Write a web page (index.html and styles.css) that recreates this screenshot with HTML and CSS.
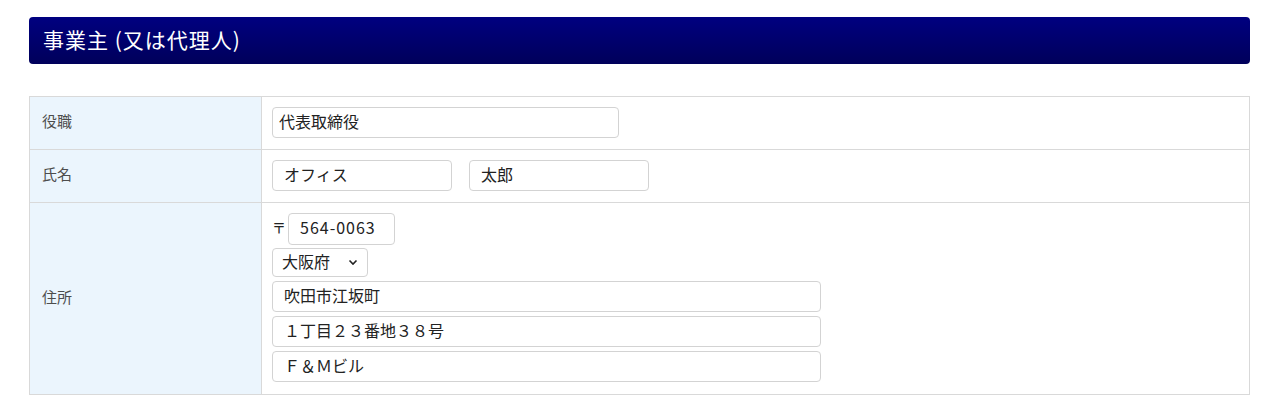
FILE: index.html
```html
<!DOCTYPE html>
<html lang="ja">
<head>
    <meta charset="UTF-8">
    <title>事業主 (又は代理人)</title>
    <link rel="stylesheet" href="styles.css">
</head>
<body>
    <div class="section">
        <h2 class="section-title">事業主 (又は代理人)</h2>

        <table class="form-table">
            <colgroup>
                <col class="col-label">
                <col>
            </colgroup>
            <tr>
                <th>役職</th>
                <td><input type="text" class="input w-title" value="代表取締役"></td>
            </tr>
            <tr>
                <th>氏名</th>
                <td>
                    <div class="name-row">
                        <input type="text" class="input w-name" value="オフィス">
                        <input type="text" class="input w-name" value="太郎">
                    </div>
                </td>
            </tr>
            <tr>
                <th>住所</th>
                <td class="address-cell">
                    <div class="address">
                        <div class="zip-row">
                            <span class="zip-mark">〒</span>
                            <input type="text" class="input w-zip" value="564-0063">
                        </div>
                        <select class="select">
                            <option>大阪府</option>
                        </select>
                        <input type="text" class="input w-addr" value="吹田市江坂町">
                        <input type="text" class="input w-addr" value="１丁目２３番地３８号">
                        <input type="text" class="input w-addr" value="Ｆ＆Ｍビル">
                    </div>
                </td>
            </tr>
        </table>
    </div>
</body>
</html>
```

FILE: styles.css
```css
body {
    margin: 0;
    font-family: "Noto Sans CJK JP", "Noto Sans", sans-serif;
    color: #333;
    background: #fff;
}
.section {
    padding: 17px 30px 0 29px;
}
.section-title {
    margin: 0 0 32px;
    height: 47px;
    padding: 0 14px 3px;
    box-sizing: border-box;
    display: flex;
    align-items: center;
    font-size: 21px;
    letter-spacing: 1px;
    font-weight: normal;
    color: #fff;
    background: linear-gradient(#000080, #00005a);
    border-radius: 4px;
}
.form-table {
    width: 100%;
    table-layout: fixed;
    border-collapse: collapse;
    font-size: 15px;
}
.col-label {
    width: 232px;
}
.form-table th,
.form-table td {
    border: 1px solid #d9d9d9;
}
.form-table th {
    padding: 0 12px 5px;
    text-align: left;
    font-weight: normal;
    color: #4d4d4d;
    background: #ebf5fd;
}
.form-table td {
    padding: 10px 10px 11px;
}
.form-table .address-cell {
    padding-bottom: 12px;
}
.input {
    box-sizing: border-box;
    height: 31px;
    padding: 0 11px 4px;
    font-family: inherit;
    font-size: 16px;
    color: #222;
    border: 1px solid #d3d3d3;
    border-radius: 4px;
    background: #fff;
}
.w-title {
    width: 347px;
    padding-left: 6px;
}
.name-row {
    display: flex;
    gap: 17px;
}
.w-name {
    width: 180px;
}
.address {
    display: flex;
    flex-direction: column;
    align-items: flex-start;
    gap: 4px;
}
.zip-row {
    display: flex;
    align-items: center;
    gap: 2px;
    height: 31px;
}
.zip-mark {
    font-size: 14px;
    color: #222;
    padding-bottom: 3px;
}
.w-zip {
    width: 107px;
    height: 32px;
    font-size: 16px;
    letter-spacing: 1px;
}
.select {
    appearance: none;
    box-sizing: border-box;
    height: 29px;
    width: 96px;
    padding: 0 20px 4px 9px;
    font-family: inherit;
    font-size: 16px;
    color: #222;
    border: 1px solid #d3d3d3;
    border-radius: 4px;
    background: #fff url("data:image/svg+xml,%3Csvg xmlns='http://www.w3.org/2000/svg' width='10' height='7' viewBox='0 0 10 7'%3E%3Cpath d='M1.5 1.5 5 5l3.5-3.5' fill='none' stroke='%23222' stroke-width='1.6'/%3E%3C/svg%3E") no-repeat right 9px center;
}
.w-addr {
    width: 549px;
}
```
